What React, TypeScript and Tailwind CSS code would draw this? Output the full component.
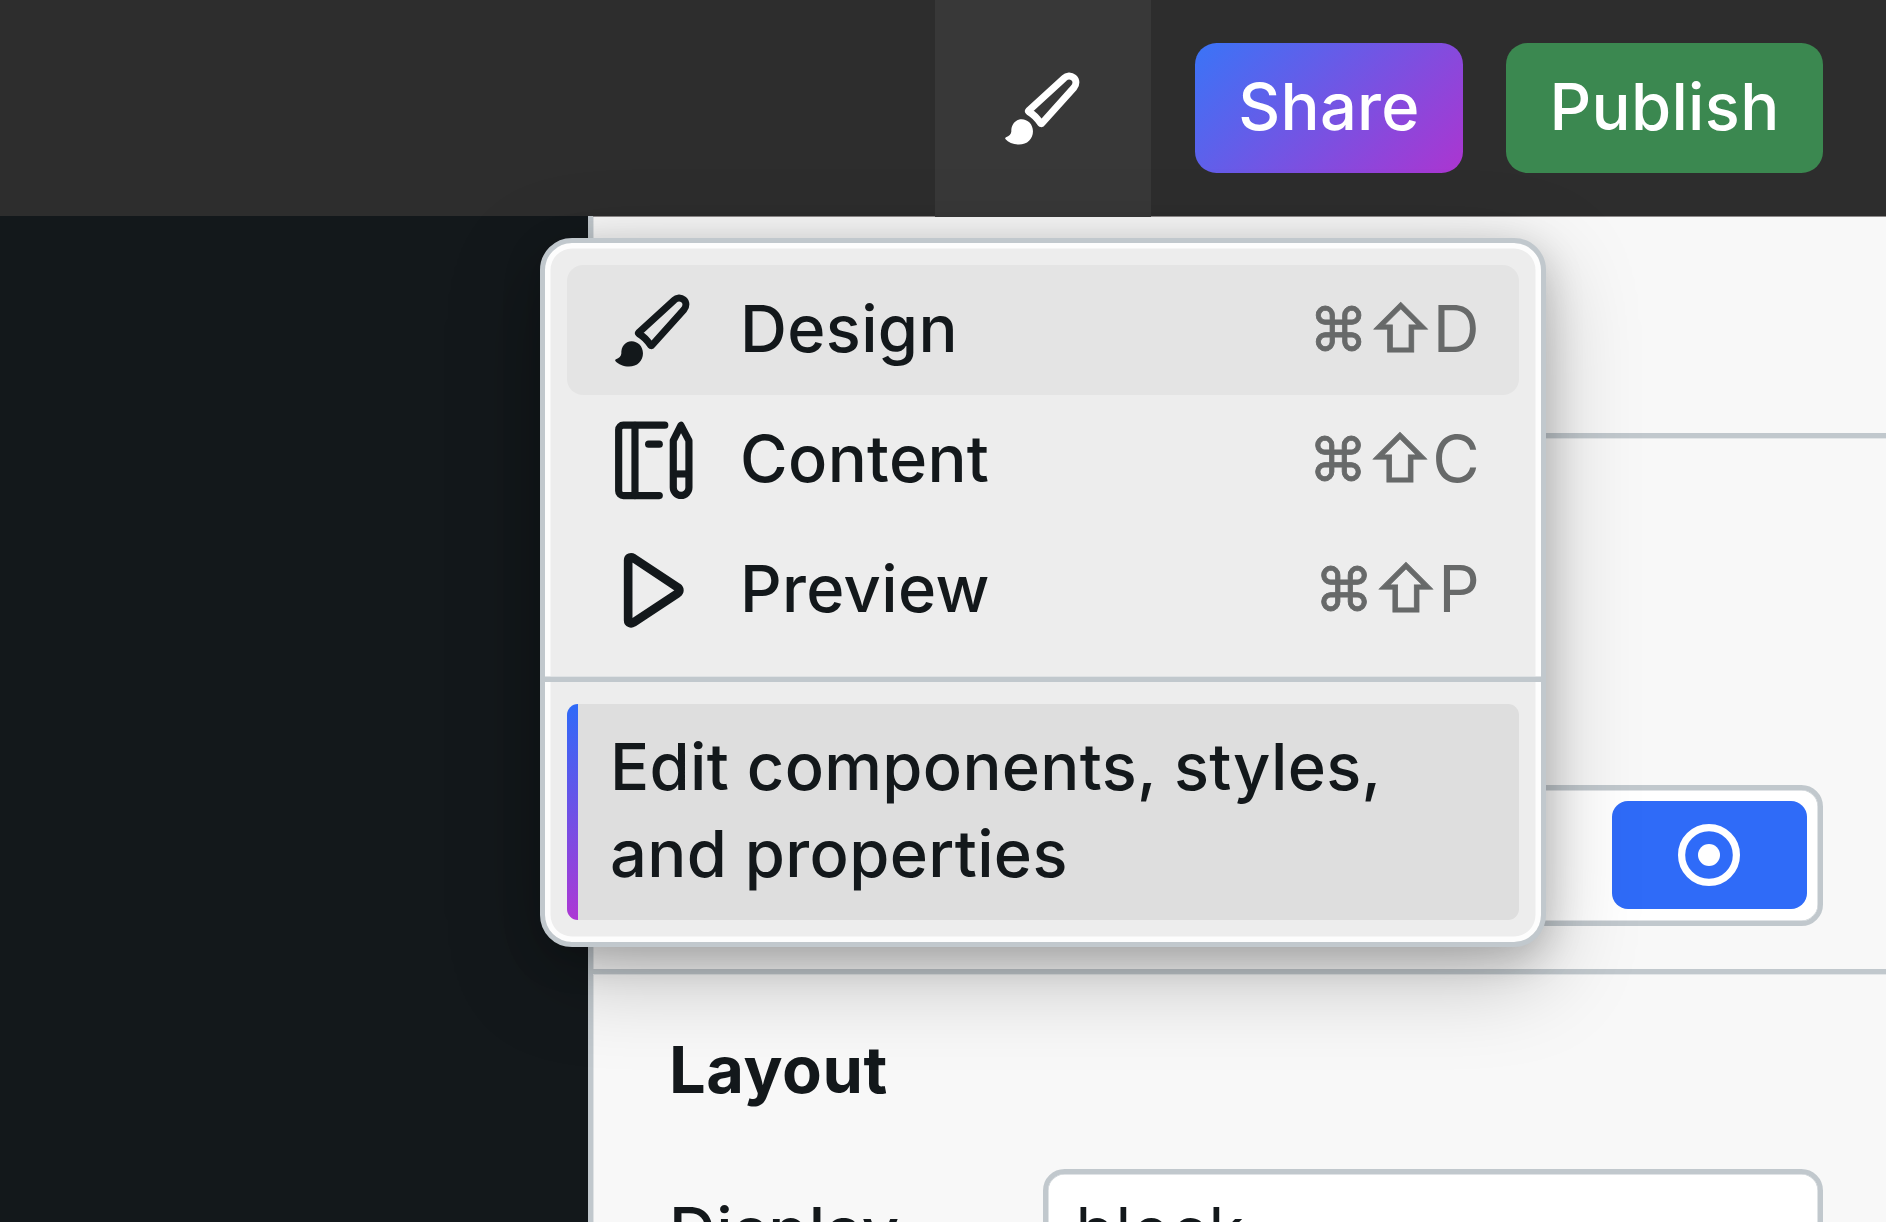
import React from "react";

type IconProps = { className?: string };

function BrushIcon({ className }: IconProps) {
  return (
    <svg viewBox="0 0 260 260" className={className} fill="none">
      <path
        d="M83 140 C82 139 82 138 84 136 L189 40 C198 31 210 31 218 38 C227 46 227 58 219 68 L123 175 C122 177 120 176 119 175 C109 160 99 149 83 140 Z"
        stroke="currentColor"
        strokeWidth="21"
        strokeLinejoin="round"
      />
      <path
        d="M62 163 C80 163 96 178 96 199 C96 222 79 239 54 239 C38 239 22 232 13 222 C12 220 13 218 15 217 C24 214 31 208 31 200 C30 180 42 163 62 163 Z"
        fill="currentColor"
      />
    </svg>
  );
}

function ContentIcon({ className }: IconProps) {
  return (
    <svg
      viewBox="0 0 260 260"
      className={className}
      fill="none"
      stroke="currentColor"
      strokeWidth="21.5"
      strokeLinecap="round"
      strokeLinejoin="round"
    >
      <path d="M161.500 24.500 H37 A14 14 0 0 0 23 38.500 V222 A14 14 0 0 0 37 236 H145" />
      <path d="M72 25 V236" />
      <path d="M113 81.500 H145" />
      <path d="M210 25 L187 71 V212 A23.500 23.500 0 0 0 234 212 V71 Z" />
      <path d="M187 171 H234" strokeLinecap="butt" />
    </svg>
  );
}

function PlayIcon({ className }: IconProps) {
  return (
    <svg viewBox="0 0 260 260" className={className} fill="none">
      <path
        d="M51.500 40 C51.500 31 60 29 67 33 L200 121 C207 126 207 134 200 139 L67 227 C60 231 51.500 229 51.500 220 Z"
        stroke="currentColor"
        strokeWidth="26"
        strokeLinejoin="round"
      />
    </svg>
  );
}

const items = [
  { label: "Design", letter: "D", Icon: BrushIcon, active: true },
  { label: "Content", letter: "C", Icon: ContentIcon, active: false },
  { label: "Preview", letter: "P", Icon: PlayIcon, active: false },
];

function ModeMenu() {
  return (
    <div className="absolute left-[540px] top-[238px] z-20 w-[1006px] rounded-[32px] border-[5px] border-[#c1c8cd] bg-[#ededed] py-[22px] shadow-[inset_0_0_0_5.5px_#fdfdfd,0_11px_38px_rgba(0,0,0,0.18),0_27px_92px_rgba(0,0,0,0.25)]">
      <div className="flex flex-col px-[22px]">
        {items.map(({ label, letter, Icon, active }) => (
          <div
            key={label}
            className={`flex h-[130px] items-center rounded-[16px] pl-[43.5px] pr-[39px] ${active ? "bg-[#e4e4e4]" : ""}`}
          >
            <Icon className="size-[86.6px] shrink-0" />
            <span className="ml-[43px] flex-1 pb-[4px] font-medium">{label}</span>
            <span className="flex items-baseline pb-[2px] font-normal text-[#676969]">
              <span className="relative -left-px -top-[2px] flex w-[62px] justify-center text-[59px] [-webkit-text-stroke:0.8px_#676969]">⌘</span>
              <span className="relative -left-px flex w-[62px] justify-center text-[63px] [-webkit-text-stroke:0.8px_#676969]">⇧</span>
              <span>{letter}</span>
            </span>
          </div>
        ))}
      </div>
      <div className="my-[22px] h-[5px] bg-[#c1c8cd] shadow-[0_-1px_0_#dfe2e4]" />
      <div className="mx-[22px] flex h-[216px] overflow-hidden rounded-[11px] bg-[#dedede]">
        <div className="w-[11px] bg-[linear-gradient(180deg,#2e6af8,#ad38d4)]" />
        <p className="pl-[32px] pt-[19px] font-medium leading-[87px]">
          Edit components, styles,
          <br />
          and properties
        </p>
      </div>
    </div>
  );
}

export default function App() {
  return (
    <div className="relative flex h-[1222px] w-[1886px] flex-col overflow-hidden bg-[#13181b] font-['Inter',sans-serif] text-[65px] leading-[87px] tracking-[0.005em] text-[#13181b]">
      <header className="relative z-10 flex h-[216px] shrink-0 items-center justify-end bg-[#2d2d2d] pr-[63px] font-medium text-white">
        <div className="-mb-px mr-[44px] flex h-[217px] w-[216px] items-center justify-center bg-[#383838] pl-[2px]">
          <BrushIcon className="size-[86.6px]" />
        </div>
        <button className="mr-[43px] flex h-[130px] w-[268px] items-center justify-center rounded-[21.6px] bg-[linear-gradient(135deg,#3a74f7,#ac35d0)] pb-[4px]">
          Share
        </button>
        <button className="flex h-[130px] w-[317px] items-center justify-center rounded-[21.6px] bg-[#3b8850] pb-[4px]">
          Publish
        </button>
      </header>
      <div className="flex min-h-0 flex-1">
        <main className="w-[588px] shrink-0" />
        <aside className="flex flex-1 flex-col border-l-[5px] border-[#c1c8cd] bg-[#f8f8f8] shadow-[inset_0_1px_0_#8c8989,inset_1px_0_0_#dfe2e4]">
          <div className="h-[222px] shrink-0 border-b-[5px] border-[#c1c8cd] shadow-[0_1px_0_#e3e6e8]" />
          <div className="flex h-[536px] shrink-0 items-end justify-end border-b-[5px] border-[#c1c8cd] pb-[43px] pr-[63px] shadow-[0_1px_0_#e3e6e8]">
            <div className="flex h-[141px] w-[780px] items-center justify-end rounded-[21.6px] border-[5px] border-[#c1c8cd] bg-white pb-px pr-[11.5px] shadow-[inset_0_0_0_0.5px_#c1c8cd]">
              <div className="flex h-[108px] w-[195px] items-center justify-center rounded-[16px] bg-[#2f6bf8]">
                <svg viewBox="0 0 62 62" className="size-[62px]" fill="none">
                  <circle cx="31" cy="31" r="27.4" stroke="white" strokeWidth="7.2" />
                  <circle cx="31" cy="31" r="11" fill="white" />
                </svg>
              </div>
            </div>
          </div>
          <h2 className="mt-[52px] shrink-0 pl-[76px] font-bold tracking-[0.009em]">Layout</h2>
          <div className="mt-[56px] flex shrink-0 pl-[76px] pr-[63px]">
            <span className="w-[374px] shrink-0 pt-[18px] font-medium">Display</span>
            <div className="h-[130px] flex-1 rounded-[21.6px] border-[5px] border-[#c1c8cd] bg-white pl-[27.5px] pt-[13px] shadow-[inset_0_0_0_0.5px_#c1c8cd]">
              block
            </div>
          </div>
        </aside>
      </div>
      <ModeMenu />
    </div>
  );
}
